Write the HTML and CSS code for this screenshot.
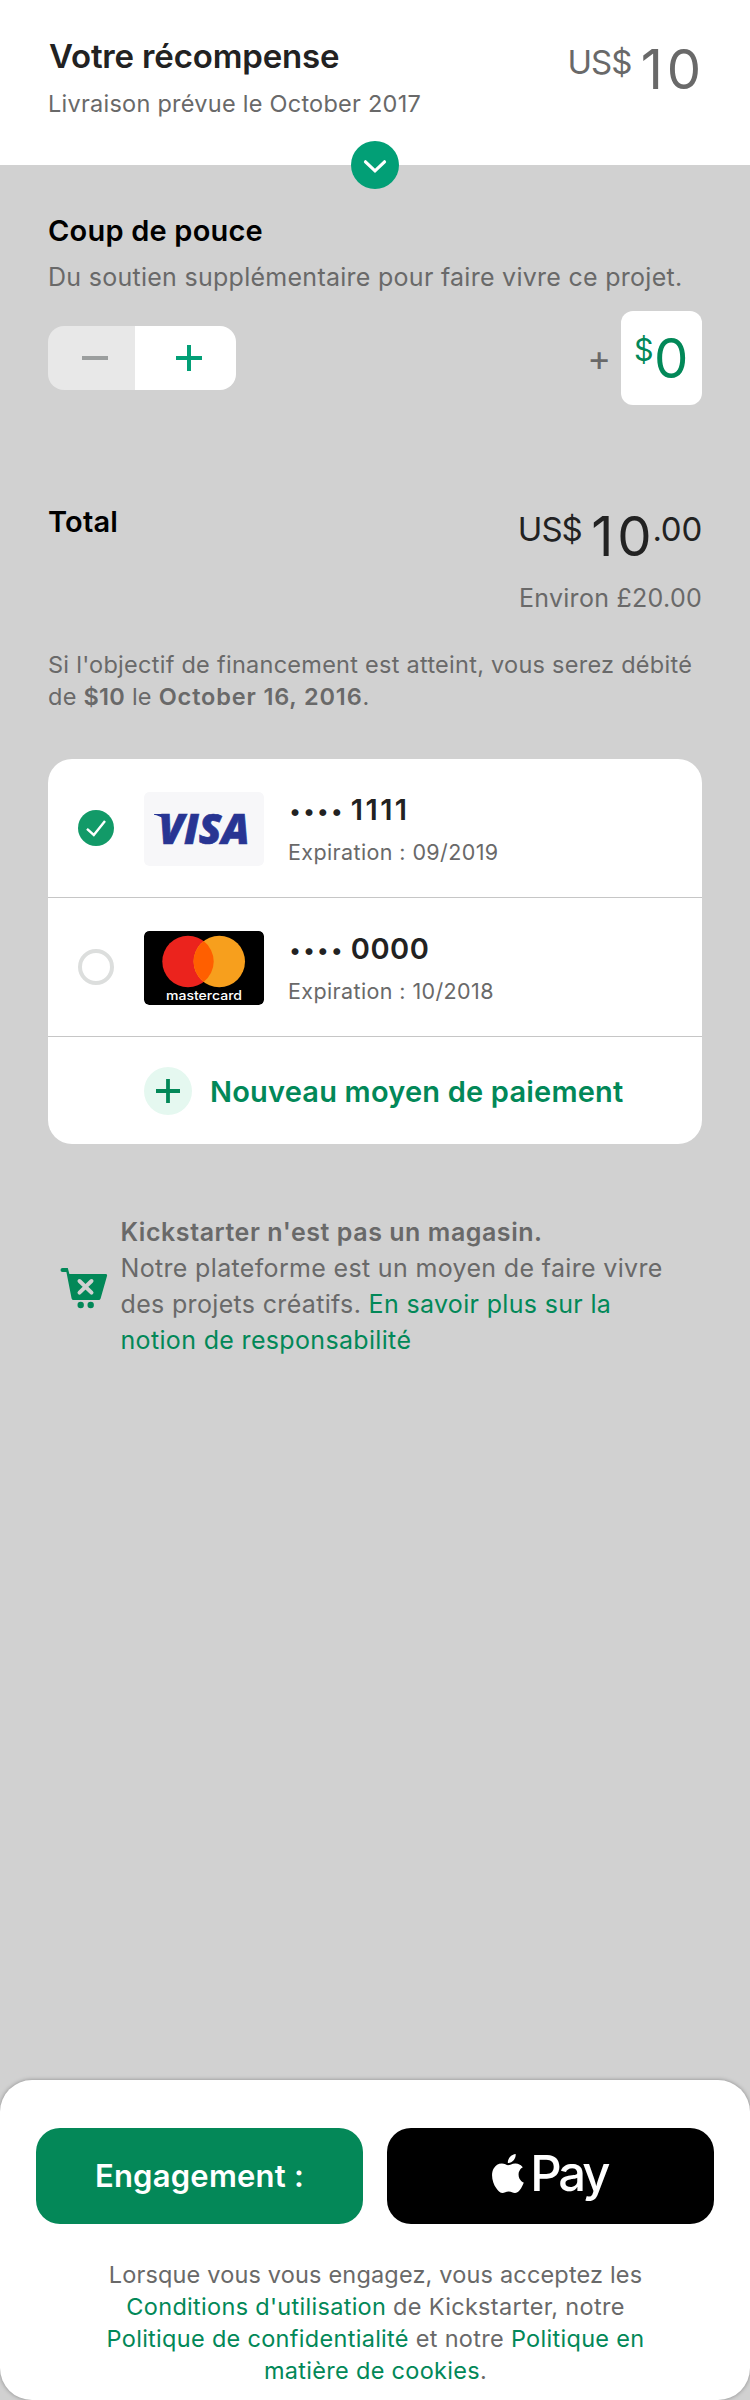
FILE: index.html
```html
<!DOCTYPE html>
<html lang="fr">
<head>
<meta charset="utf-8">
<title>Votre récompense</title>
<link rel="stylesheet" href="styles.css">
</head>
<body>
<div class="page">
  <header class="reward">
    <div class="reward-info">
      <h1 class="reward-title">Votre récompense</h1>
      <p class="reward-delivery">Livraison prévue le October 2017</p>
    </div>
    <div class="price price-muted"><span class="price-currency">US$</span><span class="price-whole">10</span></div>
    <button class="expand" aria-label="Afficher">
      <svg width="48" height="48" viewBox="0 0 48 48"><path d="M14.5 20.8 24 29.8 33.5 20.8" fill="none" stroke="#fff" stroke-width="3.2" stroke-linecap="round"/></svg>
    </button>
  </header>

  <main class="content">
    <h2 class="section-title">Coup de pouce</h2>
    <p class="section-text">Du soutien supplémentaire pour faire vivre ce projet.</p>
    <div class="bonus">
      <div class="stepper">
        <button class="step step-minus" aria-label="Moins"><svg width="26" height="26" viewBox="0 0 26 26"><path d="M0 13h26" stroke="#9b9e9e" stroke-width="4"/></svg></button>
        <button class="step step-plus" aria-label="Plus"><svg width="26" height="26" viewBox="0 0 26 26"><path d="M0 13h26M13 0v26" stroke="#029f76" stroke-width="4"/></svg></button>
      </div>
      <div class="bonus-amount">
        <span class="bonus-plus">+</span>
        <div class="amount-box"><span class="amount-currency">$</span><span class="amount-value">0</span></div>
      </div>
    </div>

    <div class="total">
      <h2 class="section-title total-title">Total</h2>
      <div class="total-values">
        <div class="price price-total"><span class="price-currency">US$</span><span class="price-whole">10</span><span class="price-cents">.00</span></div>
        <p class="total-approx">Environ £20.00</p>
      </div>
    </div>

    <p class="charge-note">Si l'objectif de financement est atteint, vous serez débité<br>de <b class="note-sum">$10</b> le <b class="note-date">October 16, 2016</b>.</p>

    <section class="cards">
      <div class="card">
        <svg class="radio" width="36" height="36" viewBox="0 0 36 36"><circle cx="18" cy="18" r="18" fill="#129a68"/><path d="M9 18.8 15.8 25 27 11" fill="none" stroke="#fff" stroke-width="2.4"/></svg>
        <svg class="brand" width="120" height="74" viewBox="0 0 120 74"><rect width="120" height="74" rx="5" fill="#f7f7f9"/><path d="M10 22h12l4 12C22.5 28 17 24 10 22.8z" fill="#283593"/><text class="visa-text" x="14.5" y="51.8" textLength="91" lengthAdjust="spacingAndGlyphs">VISA</text></svg>
        <div class="card-info">
          <p class="card-number"><span class="dots">••••</span> <span class="ones">1111</span></p>
          <p class="card-expiry">Expiration : 09/2019</p>
        </div>
      </div>
      <div class="card">
        <svg class="radio" width="36" height="36" viewBox="0 0 36 36"><circle cx="18" cy="18" r="16" fill="none" stroke="#dcdedd" stroke-width="4"/></svg>
        <svg class="brand" width="120" height="74" viewBox="0 0 120 74"><rect width="120" height="74" rx="5"/><circle cx="44" cy="30.5" r="25.7" fill="#eb231d"/><circle cx="75.3" cy="30.5" r="25.7" fill="#f79f1d"/><path d="M59.65 10.1a25.7 25.7 0 0 1 0 40.8a25.7 25.7 0 0 1 0-40.8z" fill="#ff5f00"/><text class="mc-text" x="22" y="69.3" textLength="76" lengthAdjust="spacingAndGlyphs">mastercard</text></svg>
        <div class="card-info">
          <p class="card-number"><span class="dots">••••</span> <span class="zeros">0000</span></p>
          <p class="card-expiry">Expiration : 10/2018</p>
        </div>
      </div>
      <div class="card-new">
        <svg width="48" height="48" viewBox="0 0 48 48"><circle cx="24" cy="24" r="24" fill="#e5f8f0"/><path d="M12 24h24M24 12v24" stroke="#028858" stroke-width="3.8"/></svg>
        <span class="card-new-label">Nouveau moyen de paiement</span>
      </div>
    </section>

    <section class="notice">
      <svg class="cart" width="48" height="42" viewBox="0 0 48 42">
        <path d="M2.5 1h5.3l1.6 6H45.5Q47.6 7 47 9L40.6 31.5Q40.2 33 38.6 33H13.5Q12 33 11.6 31.5L6.4 5H2.5A2 2 0 0 1 2.5 1z" fill="#028858"/>
        <path d="M19.5 14 31.5 25.6M31.5 14 19.5 25.6" stroke="#d1d1d1" stroke-width="4" stroke-linecap="round"/>
        <circle cx="20.7" cy="38" r="3.2" fill="#028858"/><circle cx="30.7" cy="38" r="3.2" fill="#028858"/>
      </svg>
      <p class="notice-text"><b class="notice-title">Kickstarter n'est pas un magasin.</b><br>Notre plateforme est un moyen de faire vivre<br>des projets créatifs. <a class="link">En savoir plus sur la<br>notion de responsabilité</a></p>
    </section>
  </main>

  <footer class="pledge">
    <div class="pledge-buttons">
      <button class="btn btn-pledge">Engagement :</button>
      <button class="btn btn-pay">
        <svg width="32" height="39" viewBox="2.2 0 19.7 24" preserveAspectRatio="none"><path fill="#fff" d="M12.152 6.896c-.948 0-2.415-1.078-3.960-1.040-2.040.027-3.910 1.183-4.961 3.014-2.117 3.675-.546 9.103 1.519 12.090 1.013 1.454 2.208 3.090 3.792 3.039 1.520-.065 2.090-.987 3.935-.987 1.831 0 2.350.987 3.960.948 1.637-.026 2.676-1.480 3.676-2.948 1.156-1.688 1.636-3.325 1.662-3.415-.039-.013-3.182-1.221-3.220-4.857-.026-3.040 2.480-4.494 2.597-4.559-1.429-2.090-3.623-2.324-4.390-2.376-2-.156-3.675 1.090-4.610 1.090zM15.530 3.830c.843-1.012 1.400-2.427 1.245-3.830-1.207.052-2.662.805-3.532 1.818-.780.896-1.454 2.338-1.273 3.714 1.338.104 2.715-.688 3.559-1.701"/></svg>
        <span class="pay-text">Pay</span>
      </button>
    </div>
    <p class="terms"><span class="terms-first">Lorsque vous vous engagez, vous acceptez les</span><br><a class="link">Conditions d'utilisation</a> de Kickstarter, notre<br><a class="link">Politique de confidentialité</a> et notre <a class="link">Politique en<br>matière de cookies</a>.</p>
  </footer>
</div>
</body>
</html>
```
FILE: styles.css
```css
* { box-sizing: border-box; }
body { margin: 0; background: #d1d1d1; font-family: "Inter", "Liberation Sans", sans-serif; color: #696969; }
h1, h2, p { margin: 0; }
button { border: 0; padding: 0; font-family: inherit; display: flex; align-items: center; justify-content: center; }
svg { display: block; flex: none; }
.page { display: flex; flex-direction: column; width: 750px; min-height: 2400px; }

.reward { position: relative; display: flex; justify-content: space-between; height: 165px; padding: 36px 48px 0; background: #fff; }
.reward-title { margin-left: 1px; font-size: 33px; line-height: 40px; font-weight: 600; letter-spacing: -.16px; color: #222; }
.reward-delivery { margin-top: 11.5px; font-size: 23.5px; line-height: 32px; letter-spacing: .254px; }
.expand { position: absolute; left: 351px; bottom: -24px; width: 48px; height: 48px; border-radius: 50%; background: #029f76; }

.price { display: flex; align-items: flex-start; height: 56px; }
.price-currency { margin: 1px 9.5px 0 0; font-size: 33px; line-height: 40px; letter-spacing: -1px; }
.price-whole { font-size: 54.5px; line-height: 56px; letter-spacing: 3.8px; margin-right: -3px; }
.price-cents { margin: 1px 0 0 0; font-size: 33px; line-height: 40px; letter-spacing: -.24px; }
.price-muted { margin-top: 5px; }
.price-total { color: #222; }

.content { padding: 48px 48px 0; }
.section-title { font-size: 29px; line-height: 36px; font-weight: 600; letter-spacing: .2px; color: #000; }
.section-text { margin-top: 11.5px; font-size: 25px; line-height: 32px; letter-spacing: .274px; }

.bonus { display: flex; justify-content: space-between; align-items: center; margin-top: 18.5px; }
.stepper { display: flex; width: 188px; height: 64px; border-radius: 16px; overflow: hidden; }
.step-minus { width: 87px; padding-left: 7px; background: #e8e8e8; }
.step-plus { flex: 1; padding-left: 7px; background: #fff; }
.bonus-amount { display: flex; align-items: center; }
.bonus-plus { margin-right: 10px; font-size: 36px; line-height: 40px; }
.amount-box { display: flex; align-items: flex-start; width: 81px; height: 94px; padding: 19px 0 0 13px; border-radius: 12px; background: #fff; color: #028858; }
.amount-currency { font-size: 30.5px; line-height: 40px; }
.amount-value { margin-left: .5px; font-size: 54.5px; line-height: 56px; }

.total { display: flex; justify-content: space-between; margin-top: 98.5px; }
.total-values { display: flex; flex-direction: column; align-items: flex-end; padding-top: 4.5px; }
.total-approx { margin-top: 17.5px; font-size: 25px; line-height: 32px; letter-spacing: .283px; }

.charge-note { margin-top: 35px; font-size: 23.5px; line-height: 32px; letter-spacing: .265px; white-space: nowrap; }
.charge-note b, .notice-title { font-weight: 600; }
.note-date { letter-spacing: .85px; }

.cards { margin-top: 46.5px; border-radius: 24px; background: #fff; overflow: hidden; }
.card { display: flex; align-items: flex-start; height: 139px; padding: 32.5px 30px 0; border-bottom: 1px solid #c6c6c6; }
.radio { margin-top: 18.5px; }
.brand { margin: .5px 24px 0 30px; border-radius: 5px; }
.card-number { font-size: 29px; line-height: 36px; font-weight: 600; color: #222; }
.dots { margin: 0 -1.5px 0 1.5px; font-size: 22px; line-height: 1; letter-spacing: 2.8px; vertical-align: 1px; }
.ones { letter-spacing: 2.4px; }
.zeros { letter-spacing: .5px; }
.card-expiry { margin-top: 10.5px; font-size: 21.5px; line-height: 28px; letter-spacing: .39px; }
.visa-text { font: italic 800 42px "Open Sans", sans-serif; fill: #283593; stroke: #283593; stroke-width: .7px; }
.mc-text { font: 500 12.8px "Inter", sans-serif; fill: #fff; }
.card-new { display: flex; align-items: center; gap: 18px; height: 107px; padding: 0 96px 1px; }
.card-new svg { margin-top: 1px; }
.card-new-label { padding-top: 4.5px; font-size: 29px; line-height: 36px; font-weight: 600; letter-spacing: .194px; color: #028858; white-space: nowrap; }

.notice { display: flex; align-items: center; gap: 12.5px; margin-top: 70px; padding-left: 12px; }
.cart { margin-top: 4px; }
.notice-text { font-size: 25px; line-height: 36px; letter-spacing: .335px; white-space: nowrap; }
.notice-title { letter-spacing: .55px; }
.link { color: #028858; }

.pledge { margin-top: auto; height: 320px; padding: 48px 36px 0; border-radius: 32px; background: #fff; box-shadow: 0 0 4px rgba(0, 0, 0, .35); }
.pledge-buttons { display: flex; gap: 24px; }
.btn { width: 327px; height: 96px; border-radius: 24px; color: #fff; }
.btn-pledge { padding-bottom: 1px; background: #048858; font-size: 31px; font-weight: 600; letter-spacing: .217px; }
.btn-pay { gap: 6.5px; padding: 0 2px 5px 0; background: #000; }
.pay-text { font-size: 49px; line-height: 56px; font-weight: 500; letter-spacing: -3.2px; }
.terms { margin-top: 34.5px; padding-left: 1px; font-size: 23.5px; line-height: 32px; letter-spacing: .3px; text-align: center; white-space: nowrap; }
.terms-first { letter-spacing: .17px; }
```
